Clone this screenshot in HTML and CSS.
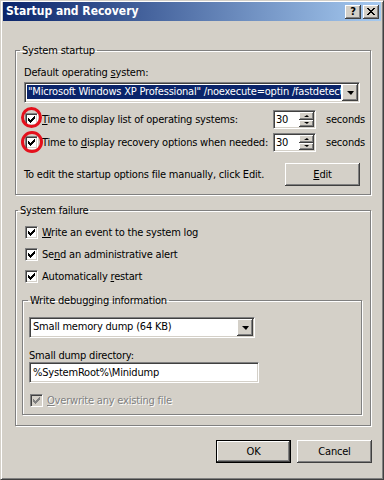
FILE: index.html
```html
<!DOCTYPE html>
<html lang="en">
<head>
    <meta charset="UTF-8">
    <title>Startup and Recovery</title>
    <link rel="stylesheet" href="styles.css">
</head>
<body>
    <div class="window">
        <div class="titlebar">
            <span class="title">Startup and Recovery</span>
            <div class="title-btns">
                <span class="tbtn">?</span>
                <span class="tbtn">
                    <svg width="8" height="7" viewBox="0 0 8 7"><path d="M0 0h2v1h1v1h2v-1h1v-1h2v1h-1v1h-1v1h-1v1h1v1h1v1h1v1h-2v-1h-1v-1h-2v1h-1v1h-2v-1h1v-1h1v-1h1v-1h-1v-1h-1v-1h-1z" fill="#000"/></svg>
                </span>
            </div>
        </div>

        <div class="dialog">
            <!-- System startup -->
            <fieldset class="group startup">
                <legend>System startup</legend>
                <div class="label">Default operating <u>s</u>ystem:</div>
                <div class="combo os-combo">
                    <span class="combo-text selected">"Microsoft Windows XP Professional" /noexecute=optin /fastdetect</span>
                    <span class="combo-btn"><i class="arrow-down"></i></span>
                </div>

                <div class="spin-row">
                    <div class="check-item">
                        <span class="check checked">
                            <svg width="7" height="7" viewBox="0 0 7 7"><path d="M0 2h1v3h-1zM1 3h1v3h-1zM2 4h1v3h-1zM3 3h1v3h-1zM4 2h1v3h-1zM5 1h1v3h-1zM6 0h1v3h-1z" fill="#000"/></svg>
                            <span class="mark mark-1"></span>
                        </span>
                        <span><u>T</u>ime to display list of operating systems:</span>
                    </div>
                    <div class="spin">
                        <span class="spin-text">30</span>
                        <span class="spin-btns">
                            <span class="spin-btn"><i class="arrow-up"></i></span>
                            <span class="spin-btn"><i class="arrow-dn"></i></span>
                        </span>
                    </div>
                    <span class="unit">seconds</span>
                </div>

                <div class="spin-row">
                    <div class="check-item">
                        <span class="check checked">
                            <svg width="7" height="7" viewBox="0 0 7 7"><path d="M0 2h1v3h-1zM1 3h1v3h-1zM2 4h1v3h-1zM3 3h1v3h-1zM4 2h1v3h-1zM5 1h1v3h-1zM6 0h1v3h-1z" fill="#000"/></svg>
                            <span class="mark mark-2"></span>
                        </span>
                        <span>Time to <u>d</u>isplay recovery options when needed:</span>
                    </div>
                    <div class="spin">
                        <span class="spin-text">30</span>
                        <span class="spin-btns">
                            <span class="spin-btn"><i class="arrow-up"></i></span>
                            <span class="spin-btn"><i class="arrow-dn"></i></span>
                        </span>
                    </div>
                    <span class="unit">seconds</span>
                </div>

                <div class="edit-row">
                    <span>To edit the startup options file manually, click Edit.</span>
                    <span class="btn"><u>E</u>dit</span>
                </div>
            </fieldset>

            <!-- System failure -->
            <fieldset class="group failure">
                <legend>System failure</legend>
                <div class="check-list">
                    <div class="check-item">
                        <span class="check checked">
                            <svg width="7" height="7" viewBox="0 0 7 7"><path d="M0 2h1v3h-1zM1 3h1v3h-1zM2 4h1v3h-1zM3 3h1v3h-1zM4 2h1v3h-1zM5 1h1v3h-1zM6 0h1v3h-1z" fill="#000"/></svg>
                        </span>
                        <span><u>W</u>rite an event to the system log</span>
                    </div>
                    <div class="check-item">
                        <span class="check checked">
                            <svg width="7" height="7" viewBox="0 0 7 7"><path d="M0 2h1v3h-1zM1 3h1v3h-1zM2 4h1v3h-1zM3 3h1v3h-1zM4 2h1v3h-1zM5 1h1v3h-1zM6 0h1v3h-1z" fill="#000"/></svg>
                        </span>
                        <span>Se<u>n</u>d an administrative alert</span>
                    </div>
                    <div class="check-item">
                        <span class="check checked">
                            <svg width="7" height="7" viewBox="0 0 7 7"><path d="M0 2h1v3h-1zM1 3h1v3h-1zM2 4h1v3h-1zM3 3h1v3h-1zM4 2h1v3h-1zM5 1h1v3h-1zM6 0h1v3h-1z" fill="#000"/></svg>
                        </span>
                        <span>Automatically <u>r</u>estart</span>
                    </div>
                </div>

                <fieldset class="group debug">
                    <legend>Write debugging information</legend>
                    <div class="combo dump-combo">
                        <span class="combo-text">Small memory dump (64 KB)</span>
                        <span class="combo-btn"><i class="arrow-down"></i></span>
                    </div>
                    <div class="label dir-label">Small dump directory:</div>
                    <div class="textbox">%SystemRoot%\Minidump</div>
                    <div class="check-item disabled">
                        <span class="check checked">
                            <svg width="7" height="7" viewBox="0 0 7 7"><path d="M0 2h1v3h-1zM1 3h1v3h-1zM2 4h1v3h-1zM3 3h1v3h-1zM4 2h1v3h-1zM5 1h1v3h-1zM6 0h1v3h-1z" fill="#808080"/></svg>
                        </span>
                        <span><u>O</u>verwrite any existing file</span>
                    </div>
                </fieldset>
            </fieldset>

            <div class="actions">
                <span class="btn default">OK</span>
                <span class="btn">Cancel</span>
            </div>
        </div>
    </div>
</body>
</html>
```

FILE: styles.css
```css
* {
    margin: 0;
    padding: 0;
    box-sizing: border-box;
}

body {
    font-family: "DejaVu Sans Condensed", "Liberation Sans", sans-serif;
    font-size: 11px;
    line-height: 13px;
    letter-spacing: -0.2px;
    color: #000;
    background: #d4d0c8;
}

u {
    text-decoration: underline;
    text-underline-offset: 1px;
}

.window {
    width: 384px;
    height: 480px;
    border: 1px solid;
    border-color: #d4d0c8 #404040 #404040 #d4d0c8;
    box-shadow: inset 1px 1px #fff, inset -1px -1px #808080;
    padding: 1px 2px 2px 2px;
    display: flex;
    flex-direction: column;
}

/* title bar */
.titlebar {
    height: 19px;
    background: linear-gradient(to right, #0a246a, #a6caf0);
    display: flex;
    align-items: center;
    justify-content: space-between;
    padding: 0 2px 0 3px;
}

.title {
    color: #fff;
    font-weight: bold;
    font-size: 12px;
    letter-spacing: 0;
}

.title-btns {
    display: flex;
    gap: 2px;
}

.tbtn {
    width: 16px;
    height: 14px;
    background: #d4d0c8;
    box-shadow: inset -1px -1px #404040, inset 1px 1px #fff, inset -2px -2px #808080;
    display: flex;
    align-items: center;
    justify-content: center;
    font-weight: bold;
    font-size: 11px;
}

/* dialog body */
.dialog {
    flex: 1;
    padding: 23px 10px 0 12px;
    display: flex;
    flex-direction: column;
}

.group {
    border: 1px solid #808080;
    box-shadow: inset 1px 1px #fff, 1px 1px #fff;
    min-width: 0;
}

.group legend {
    padding: 0 2px;
    margin-left: -4px;
}

.startup {
    padding: 9px 10px 8px 8px;
}

.label {
    white-space: nowrap;
}

/* combo boxes */
.combo {
    height: 21px;
    background: #fff;
    border: 1px solid;
    border-color: #808080 #fff #fff #808080;
    box-shadow: inset 1px 1px #404040, inset -1px -1px #d4d0c8;
    padding: 1px;
    display: flex;
}

.combo-text {
    flex: 1;
    min-width: 0;
    overflow: hidden;
    white-space: nowrap;
    margin: 1px 1px 2px 1px;
    padding-left: 1px;
    line-height: 14px;
}

.combo-text.selected {
    background: #0a246a;
    color: #fff;
}

.combo-btn {
    width: 16px;
    flex: none;
    background: #d4d0c8;
    box-shadow: inset -1px -1px #404040, inset 1px 1px #fff, inset -2px -2px #808080;
    display: flex;
    align-items: center;
    justify-content: center;
}

.arrow-down {
    width: 0;
    height: 0;
    border-left: 4px solid transparent;
    border-right: 3px solid transparent;
    border-top: 4px solid #000;
}

.os-combo {
    margin-top: 3px;
}

/* check boxes */
.check-item {
    display: flex;
    align-items: center;
    gap: 4px;
    height: 16px;
    white-space: nowrap;
}

.check {
    position: relative;
    width: 13px;
    height: 13px;
    flex: none;
    background: #fff;
    border: 1px solid;
    border-color: #808080 #fff #fff #808080;
    box-shadow: inset 1px 1px #404040, inset -1px -1px #d4d0c8;
    display: flex;
    align-items: center;
    justify-content: center;
}

.mark {
    position: absolute;
    border: 3px solid #e4101c;
    border-radius: 50%;
}

.mark-1 {
    width: 21px;
    height: 21px;
    left: -5px;
    top: -7px;
}

.mark-2 {
    width: 22px;
    height: 22px;
    left: -5px;
    top: -6px;
}

.disabled {
    color: #808080;
    text-shadow: 1px 1px #fff;
}

.disabled .check {
    background: #d4d0c8;
}

/* spin rows */
.spin-row {
    display: grid;
    grid-template-columns: minmax(0, 1fr) 43px 34px;
    column-gap: 10px;
    align-items: center;
    height: 19px;
    padding-left: 1px;
}

.spin-row + .spin-row {
    margin-top: 4px;
}

.os-combo + .spin-row {
    margin-top: 7px;
}

.spin {
    height: 19px;
    background: #fff;
    border: 1px solid;
    border-color: #808080 #fff #fff #808080;
    box-shadow: inset 1px 1px #404040, inset -1px -1px #d4d0c8;
    padding: 1px;
    display: flex;
}

.spin-text {
    flex: 1;
    padding-left: 1px;
    line-height: 15px;
}

.spin-btns {
    width: 15px;
    display: flex;
    flex-direction: column;
}

.spin-btn {
    flex: 1;
    background: #d4d0c8;
    box-shadow: inset -1px -1px #404040, inset 1px 1px #fff, inset -2px -2px #808080;
    display: flex;
    align-items: center;
    justify-content: center;
}

.arrow-up,
.arrow-dn {
    width: 0;
    height: 0;
    border-left: 3px solid transparent;
    border-right: 2px solid transparent;
}

.arrow-up {
    border-bottom: 2px solid #000;
}

.arrow-dn {
    border-top: 2px solid #000;
}

.unit {
    white-space: nowrap;
}

.edit-row {
    display: flex;
    align-items: center;
    justify-content: space-between;
    margin-top: 11px;
}

/* push buttons */
.btn {
    width: 75px;
    height: 23px;
    background: #d4d0c8;
    box-shadow: inset -1px -1px #404040, inset 1px 1px #fff, inset -2px -2px #808080;
    display: flex;
    align-items: center;
    justify-content: center;
}

.btn.default {
    border: 1px solid #000;
}

/* system failure */
.failure {
    margin-top: 9px;
    padding: 7px 8px 10px 6px;
}

.check-list {
    display: flex;
    flex-direction: column;
    gap: 6px;
    padding-left: 3px;
}

.debug {
    margin-top: 10px;
    padding: 10px 6px 6px 6px;
}

.debug legend {
    margin-left: -1px;
}

.dump-combo {
    width: 226px;
}

.dir-label {
    margin-top: 11px;
}

.textbox {
    width: 230px;
    height: 21px;
    background: #fff;
    border: 1px solid;
    border-color: #808080 #fff #fff #808080;
    box-shadow: inset 1px 1px #404040, inset -1px -1px #d4d0c8;
    padding: 3px 3px;
    line-height: 13px;
    white-space: nowrap;
}

.debug .check-item {
    margin-top: 9px;
    padding-left: 1px;
}

.actions {
    display: flex;
    justify-content: flex-end;
    gap: 6px;
    margin-top: 14px;
    margin-right: -1px;
}
```
